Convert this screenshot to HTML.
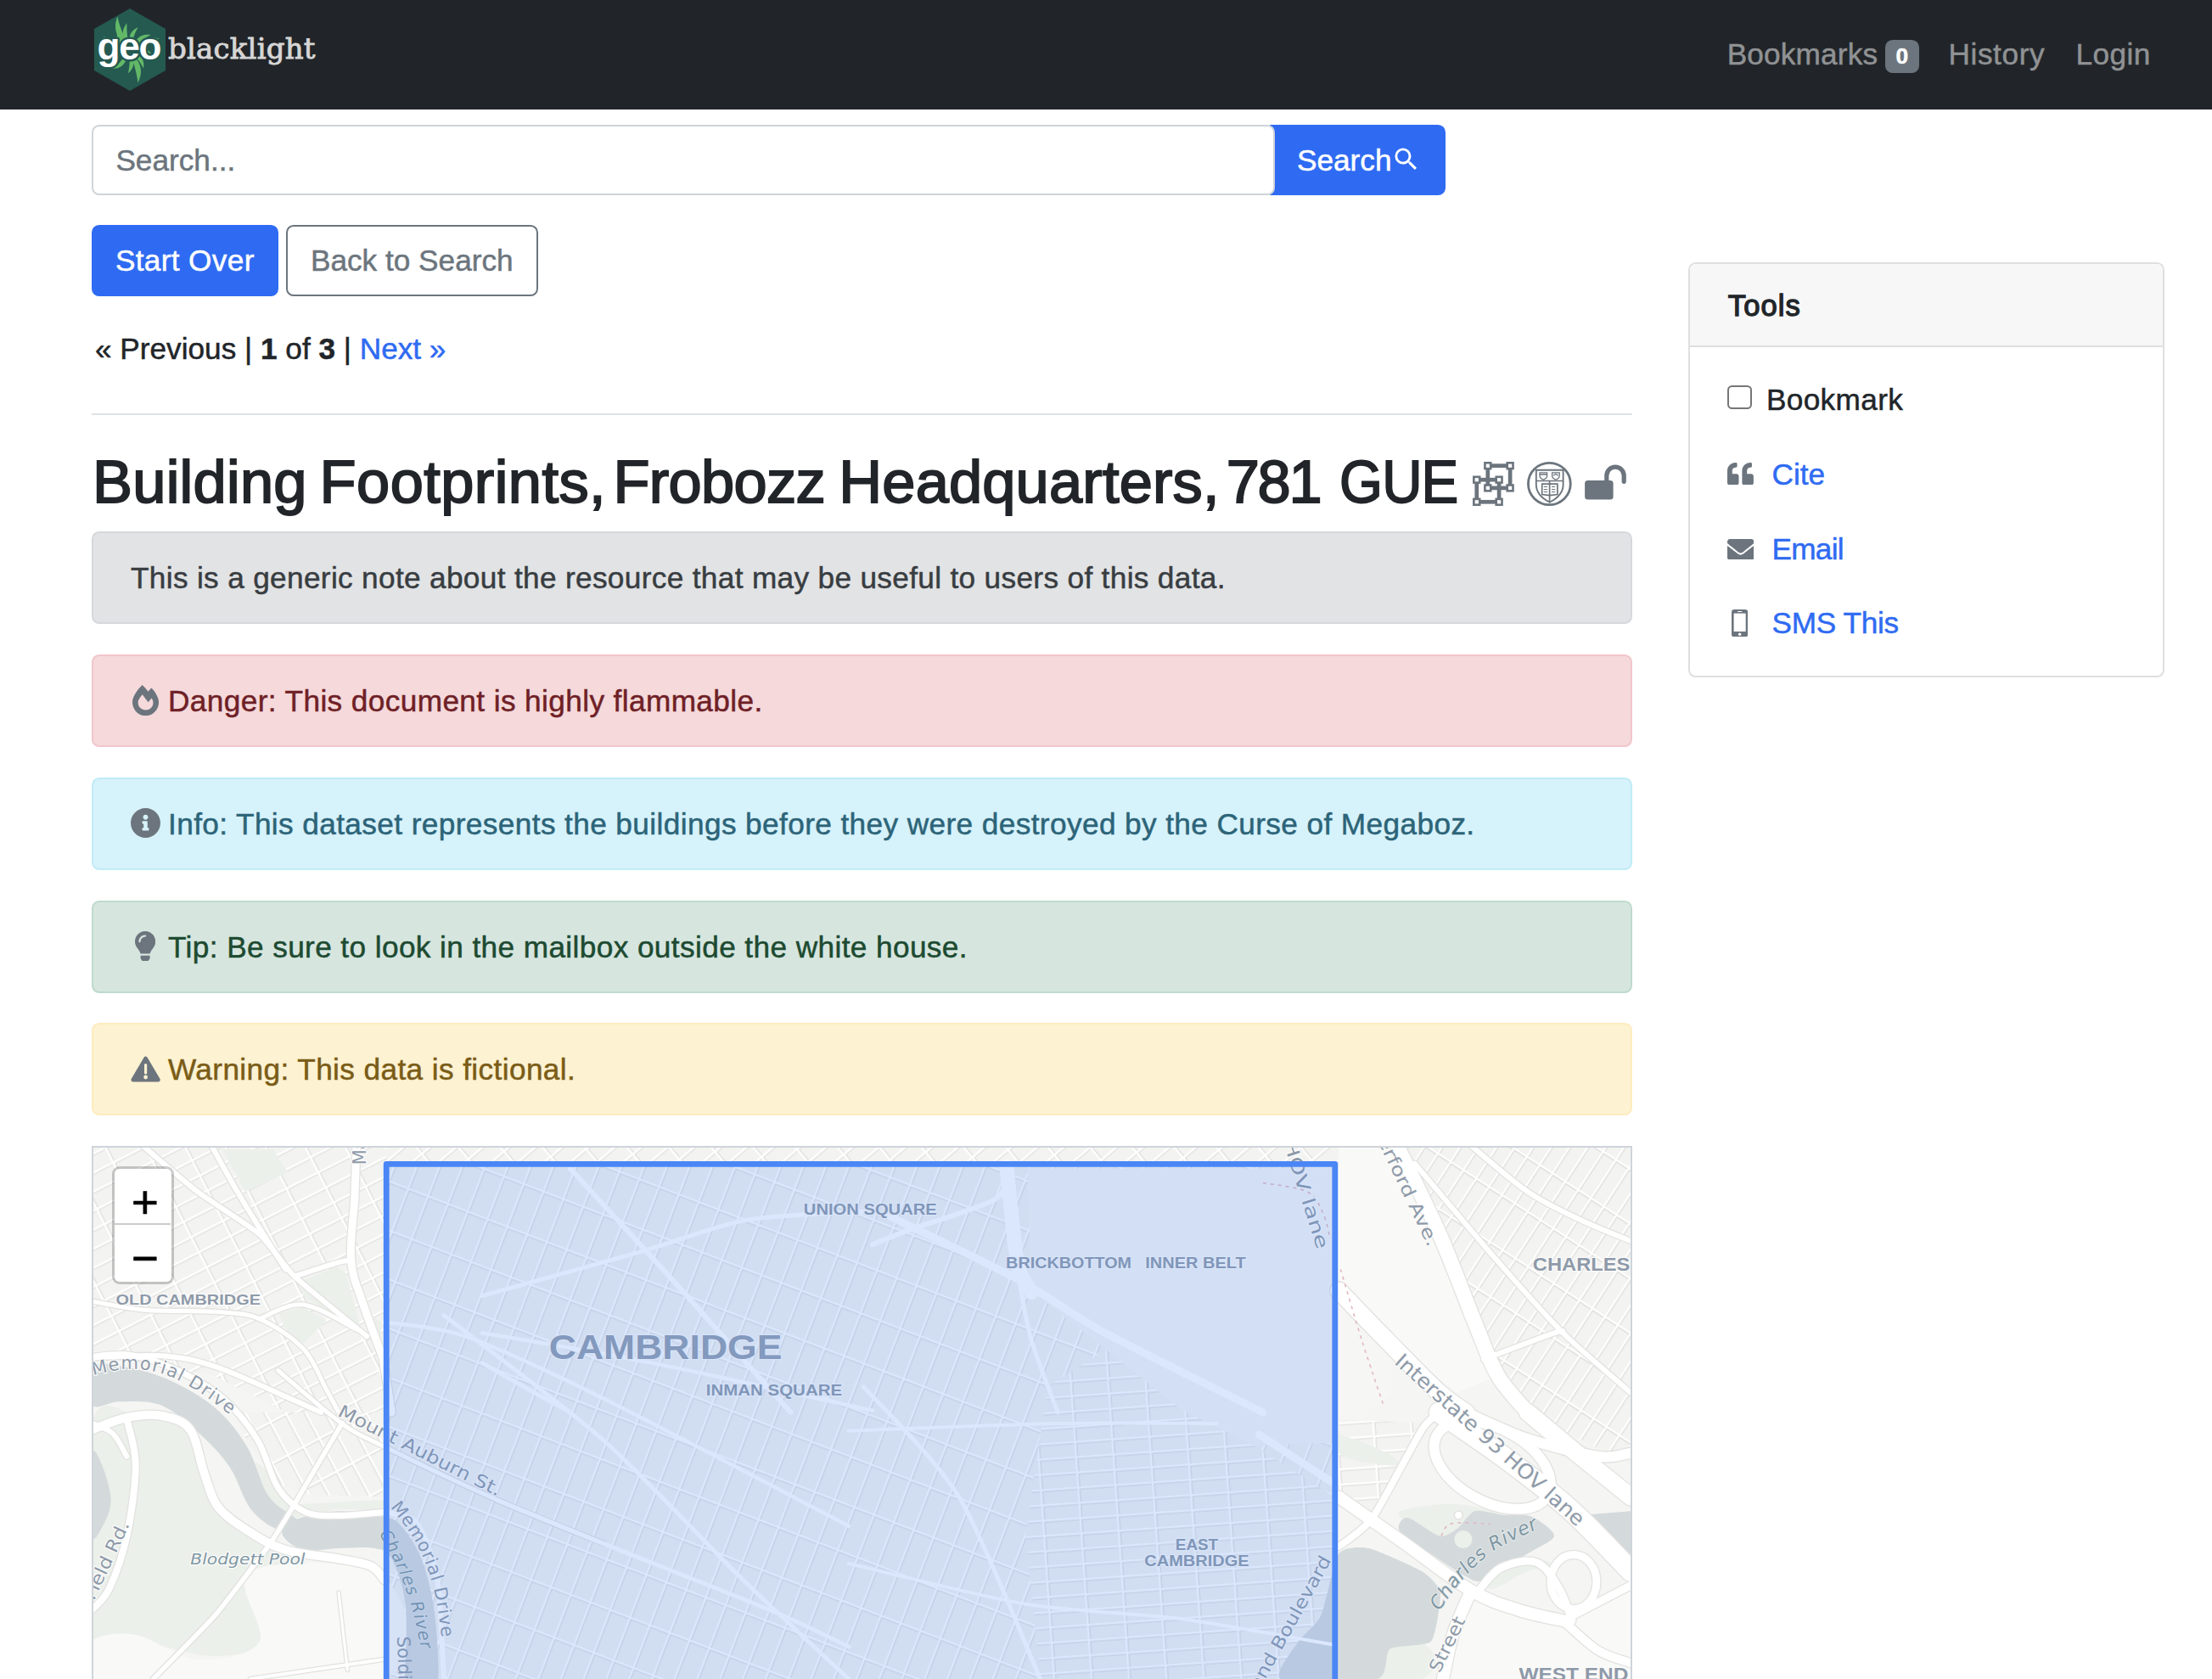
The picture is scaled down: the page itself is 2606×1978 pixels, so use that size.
<!DOCTYPE html>
<html lang="en">
<head>
<meta charset="utf-8">
<title>Building Footprints, Frobozz Headquarters, 781 GUE - GeoBlacklight</title>
<style>
*{box-sizing:border-box}
html,body{margin:0;padding:0}
body{width:2606px;height:1978px;overflow:hidden;background:#fff;color:#212529;
  font-family:"Liberation Sans",sans-serif;font-size:35.2px;line-height:1.5;position:relative;-webkit-text-stroke:.5px}
a{color:#2f6bf2;text-decoration:none}
/* ---------- top navbar ---------- */
#header-navbar{position:absolute;left:0;top:0;width:2606px;height:129px;background:#212529}
.navbar-brand{position:absolute;left:110px;top:10px;width:270px;height:100px;display:block}
.navbar-brand svg{position:absolute;left:0;top:0}
.topnav{position:absolute;left:0;top:0;margin:0;padding:0;list-style:none}
.topnav li{position:absolute;top:38px;white-space:nowrap;color:#909294;line-height:52.8px}
.topnav a{color:#909294}
.badge{position:absolute;left:0;top:9.1px;display:block;width:40px;height:39px;background:#6c757d;color:#fff;font-weight:700;font-size:26.4px;line-height:39px;
  border-radius:8.8px;text-align:center;letter-spacing:0}
/* ---------- search ---------- */
.search-q{position:absolute;left:108px;top:147px;width:1394px;height:83px;border:2.2px solid #ced4da;
  border-radius:8.8px;z-index:2;padding:0 26.4px;line-height:80.4px;color:#6c757d;background:#fff}
.search-btn{position:absolute;left:1496px;top:147px;width:207px;height:83px;background:#2f6bf2;color:#fff;
  border-radius:0 8.8px 8.8px 0;line-height:84.2px;padding-left:32px;white-space:nowrap}
.search-btn svg{position:absolute;left:143.2px;top:23.1px}
/* ---------- main ---------- */
.btn{position:absolute;top:265px;height:83.6px;line-height:80.6px;border-radius:8.8px;border:2.2px solid transparent;
  text-align:center;white-space:nowrap}
.btn-primary{left:108px;width:219.6px;letter-spacing:.35px;background:#2f6bf2;border-color:#2f6bf2;color:#fff}
.btn-outline{left:337px;width:296.6px;border-color:#6c757d;color:#6c757d;background:#fff}
.pagination-search-widgets{position:absolute;left:112px;top:384.8px;line-height:52.8px;white-space:nowrap}
hr.sep{position:absolute;left:108px;top:486.6px;width:1815px;height:0;border:0;border-top:2.2px solid #dee2e6;margin:0}
h1.title{position:absolute;left:107px;top:526px;margin:0;font-size:70.4px;line-height:84.5px;font-weight:400;white-space:nowrap;letter-spacing:-.85px;
  -webkit-text-stroke:1.9px #212529}
.alert{position:absolute;left:108px;width:1815px;height:109.2px;border:2.2px solid transparent;border-radius:8.8px;
  padding:1.1px 44px 0;line-height:104.8px;white-space:nowrap}
.alert svg{position:absolute}
.alert-secondary{top:626px;background:#e2e3e5;border-color:#d6d8db;color:#383d41}
.alert-danger{top:771.2px;background:#f5d9db;border-color:#f1c6cb;color:#6f1f26}
.alert-info{top:916px;background:#d6f2fb;border-color:#c1ebf7;color:#2c6478}
.alert-success{top:1060.6px;background:#d6e6df;border-color:#bfdacd;color:#1d4a31}
.alert-warning{top:1205.3px;background:#fdf2d2;border-color:#fdecbf;color:#7a5c17}
.alert{letter-spacing:.4px}
.alert-secondary{letter-spacing:.34px}
.alert .txt{margin-left:44px}
h1.title{width:1620px;height:84.5px}
h1.title span{position:absolute;top:0;display:block}
.title-icons svg{position:absolute}
/* ---------- sidebar ---------- */
.card{position:absolute;left:1988.6px;top:308.6px;width:561.4px;height:489px;border:2.2px solid #dfdfdf;border-radius:8.8px;background:#fff;overflow:hidden}
.card-header{height:98.4px;background:#f7f7f7;border-bottom:2.2px solid #dfdfdf;padding:0 45.2px}
.card-header h2{margin:0;font-size:34.6px;line-height:98px;font-weight:400;letter-spacing:1.1px;-webkit-text-stroke:1.3px #212529}
.tools{list-style:none;margin:0;padding:0;position:absolute;left:.9px;top:.9px;width:100%}
.tools li{position:absolute;left:0;width:100%;height:52.8px;white-space:nowrap;line-height:52.8px}
.tools li svg,.tools li a,.tools li label,.tools li .cb{position:absolute;top:0;display:block}
.tools .cb{width:28.7px;height:28.7px;border:2.4px solid #767676;border-radius:5.5px;background:#fff}
/* ---------- map ---------- */
#map{position:absolute;left:108px;top:1350px;width:1815px;height:640px;border:2.2px solid #ced4da;background:#f3f3f1;overflow:hidden}
#map svg#mapsvg{position:absolute;left:0;top:0;display:block}
.leaflet-control-zoom{position:absolute;left:22.3px;top:22.3px;width:73.2px;height:138.8px;border:3.6px solid rgba(0,0,0,.2);border-radius:9px;background:#fff;background-clip:padding-box;overflow:hidden}
.leaflet-control-zoom a{display:block;width:66px;height:66px;color:#000;text-align:center;background:#fff;font-size:54.5px;line-height:66px;-webkit-text-stroke:.7px #000;overflow:hidden}
.leaflet-control-zoom a.zin{border-bottom:2.2px solid #ccc}
.leaflet-control-zoom a span{display:block;position:relative;top:6.5px;left:2.5px}
</style>
</head>
<body>
<nav id="header-navbar">
  <a class="navbar-brand" href="#">
    <svg width="270" height="100" viewBox="0 0 270 100">
      <polygon points="43,0 85,24 85,73 43,97 1,73 1,24" fill="#255a51"/>
      <g transform="translate(42.8,49)" fill="#63b868"><path d="M-7.7 -8.5C-20.0 -20.0 -17.0 -33.3 -14.4 -39.5C-12.9 -31.9 -9.3 -21.8 -4.3 -10.7ZM-5.2 -10.2C-11.3 -19.8 -6.2 -28.3 -3.3 -31.8C-3.6 -26.6 -3.4 -19.4 -1.8 -11.4ZM-0.2 -11.5C-1.3 -20.8 6.1 -25.2 9.7 -26.8C7.6 -23.0 5.1 -17.6 3.4 -11.0ZM6.3 -9.6C11.3 -18.9 20.6 -18.5 24.8 -18.0C20.4 -15.8 14.6 -12.4 8.9 -7.3ZM8.9 -7.2C19.5 -16.9 30.4 -14.3 35.0 -13.4C28.7 -11.7 19.4 -10.1 10.2 -5.2ZM11.3 -2.0C19.0 -4.2 23.8 1.8 25.6 4.5C22.1 3.3 17.2 1.6 11.4 1.2ZM9.8 6.1C17.5 9.8 16.9 18.0 16.2 21.6C14.5 18.0 11.6 13.4 7.4 8.8ZM6.8 9.3C17.0 21.0 12.7 33.1 9.6 38.5C9.0 31.4 6.7 21.8 3.2 11.1ZM3.4 11.0C6.8 19.1 1.0 25.0 -1.9 27.3C-0.9 23.4 -0.0 17.9 -0.2 11.5ZM-4.1 10.7C-6.7 20.3 -15.6 21.8 -19.7 21.9C-16.1 19.1 -11.5 14.7 -7.2 8.9ZM-9.8 6.1C-16.1 11.0 -22.7 7.2 -25.4 5.4C-21.7 5.3 -16.6 5.0 -11.1 3.2ZM-11.4 -1.7C-24.3 -2.7 -29.0 -12.2 -30.9 -16.4C-26.1 -13.0 -19.3 -8.1 -10.5 -4.6ZM-9.6 -6.3C-15.8 -9.4 -15.1 -16.2 -14.8 -18.9C-13.2 -16.1 -11.4 -11.9 -7.8 -8.4Z"/><circle r="12.6" fill="#255a51"/></g>
      <text x="4.6" y="59.6" font-family="Liberation Sans, sans-serif" font-weight="700" font-size="44" fill="#fff" stroke="#255a51" stroke-width="5" paint-order="stroke" stroke-linejoin="round" letter-spacing="-1.2">geo</text>
      <text x="88" y="59" font-family="DejaVu Serif, serif" font-size="34" fill="#d6d6d6" stroke="#d6d6d6" stroke-width=".9" letter-spacing=".2">blacklight</text>
    </svg>
  </a>
  <ul class="topnav">
    <li style="left:2034.7px;letter-spacing:.18px"><a href="#">Bookmarks</a></li>
    <li style="left:2220.9px"><span class="badge">0</span></li>
    <li style="left:2295.5px;letter-spacing:.6px"><a href="#">History</a></li>
    <li style="left:2445.5px;letter-spacing:.4px"><a href="#">Login</a></li>
  </ul>
</nav>

<form class="search-query-form" role="search">
  <div class="search-q">Search...</div>
  <div class="search-btn">Search
    <svg width="35.2" height="35.2" viewBox="0 0 24 24"><path fill="#fff" d="M15.5 14h-.79l-.28-.27A6.471 6.471 0 0 0 16 9.5 6.5 6.5 0 1 0 9.5 16c1.61 0 3.09-.59 4.23-1.57l.27.28v.79l5 4.99L20.490 19l-4.990-5zm-6 0C7.010 14 5 11.990 5 9.500S7.010 5 9.500 5 14 7.010 14 9.500 11.990 14 9.500 14z"/></svg>
  </div>
</form>

<main id="main-container">
  <a class="btn btn-primary" href="#">Start Over</a>
  <a class="btn btn-outline" href="#">Back to Search</a>
  <div class="pagination-search-widgets">« Previous | <strong>1</strong> of <strong>3</strong> | <a href="#">Next »</a></div>
  <hr class="sep">
  <h1 class="title"><span style="left:2px;letter-spacing:.29px">Building</span> <span style="left:269.6px;letter-spacing:.45px">Footprints,</span> <span style="left:615.5px;letter-spacing:-.68px">Frobozz</span> <span style="left:881.3px;letter-spacing:.18px">Headquarters,</span> <span style="left:1337.8px;letter-spacing:-2.35px">781</span> <span style="left:1470.7px;letter-spacing:-.85px;transform:scaleX(.93);transform-origin:0 0">GUE</span></h1>

  <span class="title-icons">
    <svg style="left:1735px;top:544px" width="49" height="52" viewBox="0 0 49 52"><g fill="none" stroke="#6c757d" stroke-width="4.7"><rect x="17.8" y="4.65" width="26.3" height="26.25"/><rect x="4.75" y="21.2" width="26.35" height="26.1"/></g><g fill="#6c757d"><rect x="13.1" y="0" width="9.4" height="9.4"/><rect x="39.4" y="0" width="9.4" height="9.4"/><rect x="13.1" y="26.2" width="9.4" height="9.4"/><rect x="39.4" y="26.2" width="9.4" height="9.4"/><rect x="0" y="16.5" width="9.5" height="9.4"/><rect x="26.4" y="16.5" width="9.4" height="9.4"/><rect x="0" y="42.6" width="9.5" height="9.4"/><rect x="26.4" y="42.6" width="9.4" height="9.4"/></g><g fill="#fff"><rect x="15.7" y="2.6" width="4.2" height="4.2"/><rect x="42" y="2.6" width="4.2" height="4.2"/><rect x="15.7" y="28.8" width="4.2" height="4.2"/><rect x="42" y="28.8" width="4.2" height="4.2"/><rect x="2.65" y="19.1" width="4.2" height="4.2"/><rect x="29" y="19.1" width="4.2" height="4.2"/><rect x="2.65" y="45.2" width="4.2" height="4.2"/><rect x="29" y="45.2" width="4.2" height="4.2"/></g></svg>
    <svg style="left:1799px;top:544px" width="53" height="52" viewBox="0 0 53 52"><g fill="none" stroke="#6c757d"><ellipse cx="26.35" cy="26" rx="24.9" ry="24.6" stroke-width="2.8"/><path d="M10.8 9.800H42.600V27C42.600 38 34 44 26.700 47.700 19.400 44 10.800 38 10.800 27Z" stroke-width="1.900"/><path d="M10.800 22.500H42.600M26.600 22.500V47.700" stroke-width="1.700"/><path d="M15 12.800h8.600v4.300c0 2.200-2.400 3.300-4.300 4.100-1.900-.8-4.300-1.900-4.300-4.100zM15 15h8.600M29.600 12.800h8.600v4.300c0 2.200-2.400 3.300-4.300 4.100-1.900-.8-4.300-1.900-4.300-4.100zM31 16.300l2.900-1.800 2.900 1.800" stroke-width="1.300"/><path d="M17.7 26.2H35.9V38.6L26.6 39.6 17.7 38.6Z" stroke-width="1.7"/><path d="M19.800 29.500h4.300M19.800 32.500h4.300M19.800 35.500h4.300M29 29.500h4.300M29 32.500h4.300M29 35.500h4.300" stroke-width="1.200"/></g></svg>
    <svg style="left:1867px;top:547px" width="50" height="43" viewBox="0 0 50 43"><rect x=".1" y="19.100" width="33.500" height="22.300" rx="3.500" fill="#6c757d"/><path d="M25.800 20V13.400A10.200 10.200 0 0 1 46.200 13.400V20.300" fill="none" stroke="#6c757d" stroke-width="5.200" stroke-linecap="round"/></svg>
  </span>

  <div class="alert alert-secondary">This is a generic note about the resource that may be useful to users of this data.</div>
  <div class="alert alert-danger"><svg style="left:45.6px;top:33.5px" width="31.1" height="36.2" viewBox="0 0 448 512" preserveAspectRatio="none"><path fill="#6c757d" d="M323.560 51.200c-20.800 19.300-39.580 39.590-56.220 59.970C240.080 73.620 206.280 35.530 168 0 69.740 91.170 0 209.960 0 281.600 0 408.850 100.290 512 224 512s224-103.150 224-230.400c0-53.270-51.980-163.140-124.440-230.400zm-19.470 340.650C282.430 407.010 255.720 416 226.860 416 154.710 416 96 368.260 96 290.750c0-38.610 24.310-72.630 72.790-130.750 6.930 7.980 98.830 125.340 98.830 125.340l58.630-66.880c4.140 6.850 7.910 13.550 11.270 19.970 27.350 52.190 15.810 118.970-33.430 153.420z"/></svg><span class="txt">Danger: This document is highly flammable.</span></div>
  <div class="alert alert-info"><svg style="left:43.8px;top:33.7px" width="35" height="35" viewBox="8 8 496 496"><path fill="#6c757d" d="M256 8C119.043 8 8 119.083 8 256c0 136.997 111.043 248 248 248s248-111.003 248-248C504 119.083 392.957 8 256 8zm0 110c23.196 0 42 18.804 42 42s-18.804 42-42 42-42-18.804-42-42 18.804-42 42-42zm56 254c0 6.627-5.373 12-12 12h-88c-6.627 0-12-5.373-12-12v-24c0-6.627 5.373-12 12-12h12v-64h-12c-6.627 0-12-5.373-12-12v-24c0-6.627 5.373-12 12-12h64c6.627 0 12 5.373 12 12v100h12c6.627 0 12 5.373 12 12v24z"/></svg><span class="txt">Info: This dataset represents the buildings before they were destroyed by the Curse of Megaboz.</span></div>
  <div class="alert alert-success"><svg style="left:49.2px;top:34px" width="24.2" height="35.4" viewBox="0 0 352 512" preserveAspectRatio="none"><path fill="#6c757d" d="M96.060 454.350c.010 6.290 1.870 12.450 5.360 17.690l17.090 25.690a31.990 31.990 0 0 0 26.640 14.280h61.710a31.990 31.990 0 0 0 26.640-14.280l17.090-25.690a31.989 31.989 0 0 0 5.360-17.690l.040-38.350H96.010l.050 38.350zM0 176c0 44.370 16.450 84.850 43.560 115.780 16.520 18.850 42.360 58.230 52.210 91.450.040.260.070.520.110.780h160.240c.040-.260.070-.510.110-.780 9.850-33.220 35.690-72.600 52.210-91.450C335.550 260.850 352 220.370 352 176 352 78.610 272.910-.300 175.450 0 73.440.310 0 82.970 0 176zm176-80c-44.110 0-80 35.890-80 80 0 8.840-7.160 16-16 16s-16-7.160-16-16c0-61.760 50.240-112 112-112 8.840 0 16 7.160 16 16s-7.160 16-16 16z"/></svg><span class="txt">Tip: Be sure to look in the mailbox outside the white house.</span></div>
  <div class="alert alert-warning"><svg style="left:43.8px;top:36.8px" width="35.2" height="30.9" viewBox="0 0 35.2 30.9"><path d="M17.6 3.2 L32.2 28 H3 Z" fill="#6c757d" stroke="#6c757d" stroke-width="5" stroke-linejoin="round"/><path d="M17.6 10.5 V20" stroke="#fdf2d2" stroke-width="3.2" stroke-linecap="round" fill="none"/><circle cx="17.6" cy="25" r="2.4" fill="#fdf2d2"/></svg><span class="txt">Warning: This data is fictional.</span></div>

  <div id="map">
<svg id="mapsvg" width="1811" height="636" viewBox="110.2 1352.2 1811 636" font-family="DejaVu Sans, sans-serif">
<defs>
<pattern id="pA" width="42" height="20" patternUnits="userSpaceOnUse" patternTransform="translate(0 0) rotate(-27)"><rect width="42" height="20" fill="#f3f3f1"/><path d="M0 0H42M0 0V20" stroke="#d9d9d7" stroke-width="7.2"/><path d="M0 0H42M0 0V20" stroke="#ffffff" stroke-width="5"/></pattern>
<pattern id="pB" width="25" height="54" patternUnits="userSpaceOnUse" patternTransform="translate(0 0) rotate(21)"><rect width="25" height="54" fill="#f3f3f1"/><path d="M0 0H25M0 0V54" stroke="#d9d9d7" stroke-width="7.2"/><path d="M0 0H25M0 0V54" stroke="#ffffff" stroke-width="5"/></pattern>
<pattern id="pC" width="44" height="18" patternUnits="userSpaceOnUse" patternTransform="translate(0 0) rotate(-4)"><rect width="44" height="18" fill="#f3f3f1"/><path d="M0 0H44M0 0V18" stroke="#d9d9d7" stroke-width="7.2"/><path d="M0 0H44M0 0V18" stroke="#ffffff" stroke-width="5"/></pattern>
<pattern id="pD" width="18" height="54" patternUnits="userSpaceOnUse" patternTransform="translate(0 0) rotate(33)"><rect width="18" height="54" fill="#f3f3f1"/><path d="M0 0H18M0 0V54" stroke="#d9d9d7" stroke-width="6.8"/><path d="M0 0H18M0 0V54" stroke="#ffffff" stroke-width="4.6"/></pattern>
<pattern id="pE" width="44" height="21" patternUnits="userSpaceOnUse" patternTransform="translate(0 0) rotate(62)"><rect width="44" height="21" fill="#f3f3f1"/><path d="M0 0H44M0 0V21" stroke="#d9d9d7" stroke-width="7.2"/><path d="M0 0H44M0 0V21" stroke="#ffffff" stroke-width="5"/></pattern>
<pattern id="pF" width="38" height="20" patternUnits="userSpaceOnUse" patternTransform="translate(0 0) rotate(-40)"><rect width="38" height="20" fill="#f3f3f1"/><path d="M0 0H38M0 0V20" stroke="#d9d9d7" stroke-width="7.0"/><path d="M0 0H38M0 0V20" stroke="#ffffff" stroke-width="4.8"/></pattern>
<clipPath id="mc"><rect x="110.2" y="1352.2" width="1811" height="636"/></clipPath>
</defs>
<g clip-path="url(#mc)">
<rect x="110" y="1352" width="1812" height="637" fill="#f5f5f3"/>
<path d="M110 1352 L1922 1352 L1922 1372 L110 1372Z" fill="url(#pF)"/>
<path d="M110 1352 L455 1352 L455 1700 L400 1690 L330 1660 L250 1620 L110 1600Z" fill="url(#pA)"/>
<path d="M274.4 1664 L451.2 1664 L451.2 1763.8 L368 1761.8 L326.4 1747.2 L295.2 1705.6Z" fill="url(#pE)"/>
<rect x="455" y="1372" width="1118" height="620" fill="url(#pB)"/>
<path d="M455 1372 L1190 1372 L1230 1480 L1200 1560 L1120 1640 L1180 1988 L455 1988Z" fill="url(#pB)"/>
<path d="M1234.4 1633.8 L1303.8 1590.4 L1390.6 1659.8 L1477.4 1703.2 L1572.9 1764 L1572.9 1978 L1225.7 1978 L1208.3 1807.4Z" fill="url(#pC)"/>
<path d="M1211 1377 L1488.1 1377 L1640 1372 L1640 1640 L1573 1700 L1477.4 1703.2 L1390.6 1659.8 L1303.8 1590.4 L1215.2 1520.6Z" fill="#f6f6f4"/>
<path d="M1660.6 1350 L1921.7 1350 L1921.7 1664.1 L1921.7 1726.4 L1800 1664 L1764.6 1620.4 L1737.6 1558 L1696 1454Z" fill="url(#pD)"/>
<path d="M1577.4 1350 L1646.1 1350 L1696 1454 L1737.6 1558 L1764.6 1620.4 L1716.8 1641.2 L1633.6 1578.8 L1577.4 1520.6Z" fill="#f9f9f7"/>
<path d="M1733.4 1874.1 L1841.6 1909.4 L1921.7 1872 L1921.7 1978.1 L1700.2 1978.1Z" fill="#f9f9f7"/>
<path d="M1577.4 1672.3 L1675.2 1676.5 L1646.1 1732.6 L1617 1788.8 L1577.4 1761.8Z" fill="url(#pC)"/>
<path d="M353.4 1510.2 L397.1 1492.5 L407.5 1499.8 L425.2 1564.2 L417.9 1566.3 L357.6 1526.8Z M328.5 1547.6 L357.6 1540.3 L384.6 1555.9 L355.5 1585 L336.8 1566.3Z M261.9 1354.2 L322.2 1354.2 L338.9 1381.2 L289 1404.1Z M432.5 1547.6 L449.1 1558 L449.1 1583 L440.8 1580.9Z M108 1676.5 C118.4 1634.5 151 1670.2 170.4 1672.3 C189.8 1674.4 212 1675.8 224.5 1689 C237 1702.1 238.3 1734.7 245.3 1751.4 C252.2 1768 255 1777.7 266.1 1788.8 C277.2 1799.9 294.9 1808.9 311.8 1817.9 C328.8 1826.9 346.5 1837.3 368 1842.9 C389.5 1848.4 426.9 1846.3 440.8 1851.2 C454.7 1856.1 461.6 1866.8 451.2 1872 C440.8 1877.2 400.9 1878.9 378.4 1882.4 C355.9 1885.9 324.7 1884.1 316 1892.8 C307.3 1901.5 336.8 1924.7 326.4 1934.4 C316 1944.1 279.6 1951 253.6 1951 C227.6 1951 194.7 1938.9 170.4 1934.4 C146.1 1929.9 118.4 1967 108 1924 C97.6 1881 97.6 1718.4 108 1676.5Z M307.7 1726.4 C315.3 1731.6 334.4 1754.1 341 1761.8 C347.5 1769.4 329.2 1771.1 347.2 1772.2 C365.2 1773.2 432.1 1766.6 449.1 1768 C466.1 1769.4 457.4 1778.7 449.1 1780.5 C440.8 1782.2 417.2 1777 399.2 1778.4 C381.2 1779.8 352.7 1788.5 341 1788.8 C329.2 1789.1 336.1 1790.2 328.5 1780.5 C320.9 1770.8 298.7 1739.6 295.2 1730.6 C291.7 1721.5 300.1 1721.2 307.7 1726.4Z M1577.4 1691 C1586.8 1691 1622.2 1705.9 1633.6 1711.8 C1645 1717.7 1650.9 1724.7 1646.1 1726.4 C1641.2 1728.1 1615.9 1724.7 1604.5 1722.2 C1593 1719.8 1581.9 1717 1577.4 1711.8 C1572.9 1706.6 1568.1 1691 1577.4 1691Z M1650.2 1780.5 C1658.9 1776.3 1695.3 1770.8 1716.8 1772.2 C1738.3 1773.5 1774 1784.3 1779.2 1788.8 C1784.4 1793.3 1761.9 1795.7 1748 1799.2 C1734.1 1802.7 1709.9 1809.9 1696 1809.6 C1682.1 1809.3 1672.4 1802 1664.8 1797.1 C1657.2 1792.3 1641.6 1784.6 1650.2 1780.5Z M1623.2 1938.6 C1631.2 1931.3 1659.6 1931.6 1671 1934.4 C1682.5 1937.2 1691.1 1947.9 1691.8 1955.2 C1692.5 1962.5 1686.6 1974.3 1675.2 1978.1 C1663.8 1981.9 1631.9 1984.7 1623.2 1978.1 C1614.5 1971.5 1615.2 1945.8 1623.2 1938.6Z M1743.8 1857.4 C1750.8 1851.5 1785.4 1838.7 1800 1836.6 C1814.6 1834.6 1831.2 1842.5 1831.2 1845 C1831.2 1847.4 1812.1 1846.7 1800 1851.2 C1787.9 1855.7 1767.8 1871 1758.4 1872 C1749 1873 1736.9 1863.3 1743.8 1857.4Z M1820.8 1693.1 C1824.3 1690.7 1852 1697.3 1862.4 1701.4 C1872.8 1705.6 1886.7 1715.7 1883.2 1718.1 C1879.7 1720.5 1852 1720.2 1841.6 1716 C1831.2 1711.8 1817.3 1695.5 1820.8 1693.1Z" fill="#ebf0ea"/>
<path d="M295.2 1851.2 C319.5 1838.4 425.2 1836.3 451.2 1857.4 C477.2 1878.6 508.4 1958 451.2 1978.1 C394 1998.2 165.2 1985.4 108 1978.1 C50.8 1970.8 99.3 1943.1 108 1934.4 C116.7 1925.7 139.2 1922.6 160 1926.1 C180.8 1929.5 208.5 1953.8 232.8 1955.2 C257.1 1956.6 295.2 1951.7 305.6 1934.4 C316 1917.1 270.9 1864 295.2 1851.2Z" fill="#f9f9f7"/>
<path d="M109 1610.8 C115.6 1603.3 133.4 1608 148.8 1610.8 C164.3 1613.5 184.1 1618.9 201.7 1627 C219.4 1635.2 239.7 1646.7 254.6 1659.6 C269.5 1672.5 281.1 1687.4 291.2 1704.3 C301.4 1721.3 306.8 1747.8 315.7 1761.3 C324.5 1774.9 336.7 1779.6 344.1 1785.7 C351.6 1791.8 363.1 1795.2 360.4 1797.9 C357.7 1800.6 338.7 1805.4 327.9 1802 C317 1798.6 304.8 1789.8 295.3 1777.6 C285.8 1765.4 281.1 1743.7 270.9 1728.8 C260.7 1713.8 247.8 1700.3 234.3 1688.1 C220.7 1675.9 205.1 1661.6 189.5 1655.5 C173.9 1649.4 154.1 1651.5 140.7 1651.5 C127.3 1651.5 114.2 1662.3 109 1655.5 C103.7 1648.7 102.3 1618.2 109 1610.8Z M332.6 1807.5 C330.9 1801.6 336.1 1795.4 347.2 1790.9 C358.3 1786.4 381.9 1781.2 399.2 1780.5 C416.5 1779.8 438.7 1783.6 451.2 1786.7 C463.7 1789.8 466.1 1789.8 474.1 1799.2 C482.1 1808.6 492.5 1823.8 499 1842.9 C505.6 1861.9 511.2 1887.9 513.6 1913.6 C516 1939.3 519.1 1982.9 513.6 1996.8 C508.1 2010.7 486.2 2014.1 480.3 1996.8 C474.4 1979.5 481.4 1919.5 478.2 1892.8 C475.1 1866.1 467.8 1848.1 461.6 1836.6 C455.4 1825.2 451.2 1826.2 440.8 1824.2 C430.4 1822.1 413.1 1823.8 399.2 1824.2 C385.3 1824.5 368.7 1829 357.6 1826.2 C346.5 1823.5 334.4 1813.4 332.6 1807.5Z M108 1713.9 C110.1 1700.4 116.7 1717.4 120.5 1726.4 C124.3 1735.4 130.9 1755.9 130.9 1768 C130.9 1780.1 124.3 1792.6 120.5 1799.2 C116.7 1805.8 110.1 1821.7 108 1807.5 C105.9 1793.3 105.9 1727.4 108 1713.9Z M1508.8 1978.1 C1499.4 1973.7 1524.8 1941.9 1529.6 1934.4 C1534.4 1926.9 1551.9 1913.6 1556.6 1903.2 C1561.4 1892.8 1571.8 1838.3 1577.4 1830.4 C1583.1 1822.5 1603 1822.1 1612.8 1824.2 C1622.6 1826.2 1666.9 1846.4 1675.2 1851.2 C1683.5 1856 1693.9 1867.8 1696 1872 C1698.1 1876.2 1697 1886.6 1696 1892.8 C1695 1899 1691.4 1929.4 1685.6 1934.4 C1679.8 1939.4 1644 1938.4 1637.8 1942.7 C1631.5 1947.1 1636.1 1974.5 1623.2 1978.1 C1610.3 1981.6 1518.2 1982.4 1508.8 1978.1Z M1650.2 1793 C1651.6 1790.7 1654.5 1786.6 1660.6 1788.8 C1666.7 1791 1688.5 1807.9 1696 1809.6 C1703.5 1811.3 1711.3 1805.2 1716.8 1801.3 C1722.3 1797.4 1730.7 1782.7 1737.6 1780.5 C1744.5 1778.3 1759.9 1783.8 1768.8 1784.6 C1777.7 1785.5 1795.8 1783.4 1804.2 1786.7 C1812.5 1790 1831.8 1803.8 1831.2 1809.6 C1830.6 1815.4 1811.1 1823.5 1800 1830.4 C1788.9 1837.3 1757.7 1858 1748 1861.6 C1738.3 1865.2 1735.5 1861.6 1727.2 1857.4 C1718.9 1853.3 1695.9 1837.3 1685.6 1830.4 C1675.3 1823.5 1655 1810.4 1650.2 1805.4 C1645.5 1800.4 1648.9 1795.2 1650.2 1793Z M1868.6 1784.6 L1921.7 1780.5 L1921.7 1830.4 L1899.8 1830.4 L1883.2 1809.6Z" fill="#d4dadc"/>
<circle cx="1724.1" cy="1813.8" r="10.5" fill="#ebf0ea"/>
<circle cx="1718.5" cy="1785.1" r="5" fill="#ffffff" stroke="#e2e2e0" stroke-width="1.5"/>
<path d="M420 1350 C419.7 1360.4 419 1389.9 417.9 1412.4 C416.9 1434.9 412 1464.4 413.8 1485.2 C415.5 1506 422.1 1518.1 428.3 1537.2 C434.6 1556.3 447.4 1589.2 451.2 1599.6" fill="none" stroke="#e2e2e0" stroke-width="11.6" stroke-linecap="round" stroke-linejoin="round"/>
<path d="M451.2 1599.6 L461.6 1664.1" fill="none" stroke="#e2e2e0" stroke-width="11.6" stroke-linecap="round" stroke-linejoin="round"/>
<path d="M168.3 1350 C174.8 1355.4 219.1 1393.7 232.8 1404.1 C246.5 1414.5 294.2 1444 305.6 1454 C317 1464 334.5 1491.9 347.2 1503.9 C359.9 1516 424 1567.6 432.5 1574.6" fill="none" stroke="#e2e2e0" stroke-width="8.6" stroke-linecap="round" stroke-linejoin="round"/>
<path d="M249.4 1350 C252.4 1355.2 272.7 1392 278.6 1402 C284.4 1412 301.9 1440.5 307.7 1449.8 C313.5 1459.2 333.9 1491 336.8 1495.6" fill="none" stroke="#e2e2e0" stroke-width="8.6" stroke-linecap="round" stroke-linejoin="round"/>
<path d="M108 1533 C118.4 1534.8 146.1 1541.4 170.4 1543.4 C194.7 1545.5 231.1 1543.8 253.6 1545.5 C276.1 1547.3 288.3 1546.6 305.6 1553.8 C322.9 1561.1 344.4 1575.3 357.6 1589.2 C370.8 1603.1 377.7 1624.6 384.6 1637 C391.6 1649.5 396.8 1659.6 399.2 1664.1" fill="none" stroke="#e2e2e0" stroke-width="7.6" stroke-linecap="round" stroke-linejoin="round"/>
<path d="M108 1599.6 C121.9 1599.3 166.9 1595.8 191.2 1597.5 C215.5 1599.3 229.3 1602 253.6 1610 C277.9 1618 316 1636.3 336.8 1645.4 C357.6 1654.4 371.5 1661 378.4 1664.1" fill="none" stroke="#e2e2e0" stroke-width="8.6" stroke-linecap="round" stroke-linejoin="round"/>
<path d="M347.2 1503.9 C355.9 1501.1 387.8 1490.4 399.2 1487.3 C410.6 1484.2 413.1 1485.5 415.8 1485.2" fill="none" stroke="#e2e2e0" stroke-width="8.6" stroke-linecap="round" stroke-linejoin="round"/>
<path d="M305.6 1553.8 C314.3 1551.1 338.5 1535.1 357.6 1537.2 C376.7 1539.3 409.6 1561.5 420 1566.3" fill="none" stroke="#e2e2e0" stroke-width="7.6" stroke-linecap="round" stroke-linejoin="round"/>
<path d="M109 1598.6 C116.3 1598.2 136.1 1593.8 152.9 1596.5 C169.7 1599.2 191.6 1606.4 209.9 1614.8 C228.2 1623.3 247.2 1633.8 262.8 1647.4 C278.4 1660.9 292.6 1678.6 303.4 1696.2 C314.3 1713.8 318.4 1738.9 327.9 1753.2 C337.4 1767.4 348.2 1776.2 360.4 1781.7 C372.6 1787.1 385.8 1785.7 401.1 1785.7 C416.4 1785.7 443.8 1782.3 452.4 1781.7" fill="none" stroke="#e2e2e0" stroke-width="9.6" stroke-linecap="round" stroke-linejoin="round"/>
<path d="M108 1684.8 C114.9 1682.4 135.7 1673 149.6 1670.2 C163.5 1667.5 178.7 1665.7 191.2 1668.2 C203.7 1670.6 216.2 1673.4 224.5 1684.8 C232.8 1696.2 235.6 1721.5 241.1 1736.8 C246.7 1752.1 248.7 1764.9 257.8 1776.3 C266.8 1787.8 282 1797.1 295.2 1805.4 C308.4 1813.8 319.5 1821 336.8 1826.2 C354.1 1831.4 382.6 1833.5 399.2 1836.6 C415.8 1839.8 427.6 1840.8 436.6 1845 C445.7 1849.1 450.5 1858.8 453.3 1861.6" fill="none" stroke="#e2e2e0" stroke-width="12.6" stroke-linecap="round" stroke-linejoin="round"/>
<path d="M149.6 1672.3 C151.3 1681.3 160 1703.5 160 1726.4 C160 1749.3 154.8 1785.3 149.6 1809.6 C144.4 1833.9 135.7 1857.4 128.8 1872 C121.9 1886.6 111.5 1892.8 108 1897" fill="none" stroke="#e2e2e0" stroke-width="10.6" stroke-linecap="round" stroke-linejoin="round"/>
<path d="M108 1676.5 C112.2 1678.6 126 1682.4 133 1689 C139.9 1695.5 146.8 1711.5 149.6 1716" fill="none" stroke="#e2e2e0" stroke-width="8.6" stroke-linecap="round" stroke-linejoin="round"/>
<path d="M403.4 1676.5 C399.6 1682.9 353 1762.5 347.2 1772.2 C341.4 1781.9 322.2 1813.3 316 1822.1 C309.8 1830.8 262.6 1892.8 253.6 1903.2 C244.6 1913.6 185.7 1973.1 180.8 1978.1" fill="none" stroke="#e2e2e0" stroke-width="8.1" stroke-linecap="round" stroke-linejoin="round"/>
<path d="M451.2 1955.2 L295.2 1978.1" fill="none" stroke="#e2e2e0" stroke-width="6.6" stroke-linecap="round" stroke-linejoin="round"/>
<path d="M399.2 1876.2 L409.6 1967.7" fill="none" stroke="#e2e2e0" stroke-width="5.6" stroke-linecap="round" stroke-linejoin="round"/>
<path d="M327.9 1614.8 C340.1 1625 380.4 1660.9 401.1 1675.9 C421.9 1690.8 421.5 1689.1 452.4 1704.3 C483.2 1719.6 543.2 1748.4 586.2 1767.4 C629.2 1786.4 689.7 1809.8 710.4 1818.3" fill="none" stroke="#e2e2e0" stroke-width="7.6" stroke-linecap="round" stroke-linejoin="round"/>
<path d="M1646.1 1350 C1654.4 1367.3 1680.7 1419.3 1696 1454 C1711.3 1488.7 1726.2 1530.3 1737.6 1558 C1749 1585.7 1754.2 1602.7 1764.6 1620.4 C1775 1638.1 1794.1 1656.8 1800 1664.1" fill="none" stroke="#e2e2e0" stroke-width="19.6" stroke-linecap="round" stroke-linejoin="round"/>
<path d="M1800 1664 C1810.4 1672.7 1842.1 1699.4 1862.4 1716 C1882.7 1732.6 1911.8 1755.9 1921.7 1763.8" fill="none" stroke="#e2e2e0" stroke-width="22.6" stroke-linecap="round" stroke-linejoin="round"/>
<path d="M1577.4 1520.6 C1586.8 1530.3 1613.8 1558.7 1633.6 1578.8 C1653.4 1598.9 1680.4 1627 1696 1641.2 C1711.6 1655.4 1722 1660.3 1727.2 1664.1" fill="none" stroke="#e2e2e0" stroke-width="22.6" stroke-linecap="round" stroke-linejoin="round"/>
<path d="M1696 1664 C1709.9 1673.7 1753.2 1702.8 1779.2 1722.2 C1805.2 1741.7 1828.3 1759 1852 1780.5 C1875.7 1802 1910.1 1839.4 1921.7 1851.2" fill="none" stroke="#e2e2e0" stroke-width="26.6" stroke-linecap="round" stroke-linejoin="round"/>
<path d="M1727.2 1664 C1739.3 1669.2 1774 1686.5 1800 1695.2 C1826 1703.9 1862.9 1713.2 1883.2 1716 C1903.5 1718.8 1915.3 1712.5 1921.7 1711.8" fill="none" stroke="#e2e2e0" stroke-width="14.6" stroke-linecap="round" stroke-linejoin="round"/>
<path d="M1577.4 1763.8 C1590.3 1772.9 1628.4 1799.5 1654.4 1817.9 C1680.4 1836.3 1710.9 1860.9 1733.4 1874.1 C1756 1887.3 1771.6 1891.1 1789.6 1897 C1807.6 1902.9 1832.9 1907.4 1841.6 1909.4" fill="none" stroke="#e2e2e0" stroke-width="16.6" stroke-linecap="round" stroke-linejoin="round"/>
<path d="M1733.4 1874.1 C1730 1882.4 1718.2 1906.7 1712.6 1924 C1707.1 1941.3 1702.2 1969.1 1700.2 1978.1" fill="none" stroke="#e2e2e0" stroke-width="16.6" stroke-linecap="round" stroke-linejoin="round"/>
<path d="M1577.4 1822.1 C1581.4 1818.8 1607.2 1802.5 1617 1788.8 C1626.7 1775.1 1667.3 1697.3 1675.2 1684.8 C1683.1 1672.3 1693.9 1666.1 1696 1664" fill="none" stroke="#e2e2e0" stroke-width="10.6" stroke-linecap="round" stroke-linejoin="round"/>
<path d="M1841.6 1909.4 C1848.5 1915.3 1869.9 1936.5 1883.2 1944.8 C1896.5 1953.1 1915.3 1956.9 1921.7 1959.4" fill="none" stroke="#e2e2e0" stroke-width="12.6" stroke-linecap="round" stroke-linejoin="round"/>
<path d="M1841.6 1909.4 L1921.7 1867.8" fill="none" stroke="#e2e2e0" stroke-width="11.6" stroke-linecap="round" stroke-linejoin="round"/>
<path d="M1758.4 1726.4m-62 0a62 36 28 1 0 124 0a62 36 28 1 0 -124 0" fill="none" stroke="#e2e2e0" stroke-width="14.6" stroke-linecap="round" stroke-linejoin="round"/>
<path d="M1854.1 1863.7m-27 0a27 32 0 1 0 54 0a27 32 0 1 0 -54 0" fill="none" stroke="#e2e2e0" stroke-width="11.6" stroke-linecap="round" stroke-linejoin="round"/>
<path d="M1743.8 1872 C1748 1867.8 1757.7 1852.2 1768.8 1847 C1779.9 1841.8 1799 1836.6 1810.4 1840.8 C1821.8 1845 1830.5 1860.6 1837.4 1872 C1844.4 1883.4 1849.6 1903.2 1852 1909.4" fill="none" stroke="#e2e2e0" stroke-width="11.6" stroke-linecap="round" stroke-linejoin="round"/>
<path d="M1733.4 1350 C1744.5 1359 1778.5 1389.5 1800 1404.1 C1821.5 1418.6 1842.1 1427.7 1862.4 1437.4 C1882.7 1447.1 1911.8 1458.2 1921.7 1462.3" fill="none" stroke="#e2e2e0" stroke-width="8.6" stroke-linecap="round" stroke-linejoin="round"/>
<path d="M1666.9 1370.8 C1676 1381.6 1740.9 1459 1758.4 1479 C1775.9 1498.9 1825.3 1554.3 1841.6 1570.5 C1857.9 1586.7 1913.7 1634.1 1921.7 1641.2" fill="none" stroke="#e2e2e0" stroke-width="8.6" stroke-linecap="round" stroke-linejoin="round"/>
<path d="M1748 1601.7 C1761.9 1596.5 1815.6 1575.7 1831.2 1570.5 C1846.8 1565.3 1839.9 1570.5 1841.6 1570.5" fill="none" stroke="#e2e2e0" stroke-width="8.6" stroke-linecap="round" stroke-linejoin="round"/>
<g fill="none" stroke="#fff" stroke-linecap="round" stroke-linejoin="round">
<path d="M420 1350 C419.7 1360.4 419 1389.9 417.9 1412.4 C416.9 1434.9 412 1464.4 413.8 1485.2 C415.5 1506 422.1 1518.1 428.3 1537.2 C434.6 1556.3 447.4 1589.2 451.2 1599.6" stroke-width="9"/>
<path d="M451.2 1599.6 L461.6 1664.1" stroke-width="9"/>
<path d="M168.3 1350 C174.8 1355.4 219.1 1393.7 232.8 1404.1 C246.5 1414.5 294.2 1444 305.6 1454 C317 1464 334.5 1491.9 347.2 1503.9 C359.9 1516 424 1567.6 432.5 1574.6" stroke-width="6"/>
<path d="M249.4 1350 C252.4 1355.2 272.7 1392 278.6 1402 C284.4 1412 301.9 1440.5 307.7 1449.8 C313.5 1459.2 333.9 1491 336.8 1495.6" stroke-width="6"/>
<path d="M108 1533 C118.4 1534.8 146.1 1541.4 170.4 1543.4 C194.7 1545.5 231.1 1543.8 253.6 1545.5 C276.1 1547.3 288.3 1546.6 305.6 1553.8 C322.9 1561.1 344.4 1575.3 357.6 1589.2 C370.8 1603.1 377.7 1624.6 384.6 1637 C391.6 1649.5 396.8 1659.6 399.2 1664.1" stroke-width="5"/>
<path d="M108 1599.6 C121.9 1599.3 166.9 1595.8 191.2 1597.5 C215.5 1599.3 229.3 1602 253.6 1610 C277.9 1618 316 1636.3 336.8 1645.4 C357.6 1654.4 371.5 1661 378.4 1664.1" stroke-width="6"/>
<path d="M347.2 1503.9 C355.9 1501.1 387.8 1490.4 399.2 1487.3 C410.6 1484.2 413.1 1485.5 415.8 1485.2" stroke-width="6"/>
<path d="M305.6 1553.8 C314.3 1551.1 338.5 1535.1 357.6 1537.2 C376.7 1539.3 409.6 1561.5 420 1566.3" stroke-width="5"/>
<path d="M109 1598.6 C116.3 1598.2 136.1 1593.8 152.9 1596.5 C169.7 1599.2 191.6 1606.4 209.9 1614.8 C228.2 1623.3 247.2 1633.8 262.8 1647.4 C278.4 1660.9 292.6 1678.6 303.4 1696.2 C314.3 1713.8 318.4 1738.9 327.9 1753.2 C337.4 1767.4 348.2 1776.2 360.4 1781.7 C372.6 1787.1 385.8 1785.7 401.1 1785.7 C416.4 1785.7 443.8 1782.3 452.4 1781.7" stroke-width="7"/>
<path d="M108 1684.8 C114.9 1682.4 135.7 1673 149.6 1670.2 C163.5 1667.5 178.7 1665.7 191.2 1668.2 C203.7 1670.6 216.2 1673.4 224.5 1684.8 C232.8 1696.2 235.6 1721.5 241.1 1736.8 C246.7 1752.1 248.7 1764.9 257.8 1776.3 C266.8 1787.8 282 1797.1 295.2 1805.4 C308.4 1813.8 319.5 1821 336.8 1826.2 C354.1 1831.4 382.6 1833.5 399.2 1836.6 C415.8 1839.8 427.6 1840.8 436.6 1845 C445.7 1849.1 450.5 1858.8 453.3 1861.6" stroke-width="10"/>
<path d="M149.6 1672.3 C151.3 1681.3 160 1703.5 160 1726.4 C160 1749.3 154.8 1785.3 149.6 1809.6 C144.4 1833.9 135.7 1857.4 128.8 1872 C121.9 1886.6 111.5 1892.8 108 1897" stroke-width="8"/>
<path d="M108 1676.5 C112.2 1678.6 126 1682.4 133 1689 C139.9 1695.5 146.8 1711.5 149.6 1716" stroke-width="6"/>
<path d="M403.4 1676.5 C399.6 1682.9 353 1762.5 347.2 1772.2 C341.4 1781.9 322.2 1813.3 316 1822.1 C309.8 1830.8 262.6 1892.8 253.6 1903.2 C244.6 1913.6 185.7 1973.1 180.8 1978.1" stroke-width="5.5"/>
<path d="M451.2 1955.2 L295.2 1978.1" stroke-width="4"/>
<path d="M399.2 1876.2 L409.6 1967.7" stroke-width="3"/>
<path d="M327.9 1614.8 C340.1 1625 380.4 1660.9 401.1 1675.9 C421.9 1690.8 421.5 1689.1 452.4 1704.3 C483.2 1719.6 543.2 1748.4 586.2 1767.4 C629.2 1786.4 689.7 1809.8 710.4 1818.3" stroke-width="5"/>
<path d="M1646.1 1350 C1654.4 1367.3 1680.7 1419.3 1696 1454 C1711.3 1488.7 1726.2 1530.3 1737.6 1558 C1749 1585.7 1754.2 1602.7 1764.6 1620.4 C1775 1638.1 1794.1 1656.8 1800 1664.1" stroke-width="17"/>
<path d="M1800 1664 C1810.4 1672.7 1842.1 1699.4 1862.4 1716 C1882.7 1732.6 1911.8 1755.9 1921.7 1763.8" stroke-width="20"/>
<path d="M1577.4 1520.6 C1586.8 1530.3 1613.8 1558.7 1633.6 1578.8 C1653.4 1598.9 1680.4 1627 1696 1641.2 C1711.6 1655.4 1722 1660.3 1727.2 1664.1" stroke-width="20"/>
<path d="M1696 1664 C1709.9 1673.7 1753.2 1702.8 1779.2 1722.2 C1805.2 1741.7 1828.3 1759 1852 1780.5 C1875.7 1802 1910.1 1839.4 1921.7 1851.2" stroke-width="24"/>
<path d="M1727.2 1664 C1739.3 1669.2 1774 1686.5 1800 1695.2 C1826 1703.9 1862.9 1713.2 1883.2 1716 C1903.5 1718.8 1915.3 1712.5 1921.7 1711.8" stroke-width="12"/>
<path d="M1577.4 1763.8 C1590.3 1772.9 1628.4 1799.5 1654.4 1817.9 C1680.4 1836.3 1710.9 1860.9 1733.4 1874.1 C1756 1887.3 1771.6 1891.1 1789.6 1897 C1807.6 1902.9 1832.9 1907.4 1841.6 1909.4" stroke-width="14"/>
<path d="M1733.4 1874.1 C1730 1882.4 1718.2 1906.7 1712.6 1924 C1707.1 1941.3 1702.2 1969.1 1700.2 1978.1" stroke-width="14"/>
<path d="M1577.4 1822.1 C1581.4 1818.8 1607.2 1802.5 1617 1788.8 C1626.7 1775.1 1667.3 1697.3 1675.2 1684.8 C1683.1 1672.3 1693.9 1666.1 1696 1664" stroke-width="8"/>
<path d="M1841.6 1909.4 C1848.5 1915.3 1869.9 1936.5 1883.2 1944.8 C1896.5 1953.1 1915.3 1956.9 1921.7 1959.4" stroke-width="10"/>
<path d="M1841.6 1909.4 L1921.7 1867.8" stroke-width="9"/>
<path d="M1758.4 1726.4m-62 0a62 36 28 1 0 124 0a62 36 28 1 0 -124 0" stroke-width="12"/>
<path d="M1854.1 1863.7m-27 0a27 32 0 1 0 54 0a27 32 0 1 0 -54 0" stroke-width="9"/>
<path d="M1743.8 1872 C1748 1867.8 1757.7 1852.2 1768.8 1847 C1779.9 1841.8 1799 1836.6 1810.4 1840.8 C1821.8 1845 1830.5 1860.6 1837.4 1872 C1844.4 1883.4 1849.6 1903.2 1852 1909.4" stroke-width="9"/>
<path d="M1733.4 1350 C1744.5 1359 1778.5 1389.5 1800 1404.1 C1821.5 1418.6 1842.1 1427.7 1862.4 1437.4 C1882.7 1447.1 1911.8 1458.2 1921.7 1462.3" stroke-width="6"/>
<path d="M1666.9 1370.8 C1676 1381.6 1740.9 1459 1758.4 1479 C1775.9 1498.9 1825.3 1554.3 1841.6 1570.5 C1857.9 1586.7 1913.7 1634.1 1921.7 1641.2" stroke-width="6"/>
<path d="M1748 1601.7 C1761.9 1596.5 1815.6 1575.7 1831.2 1570.5 C1846.8 1565.3 1839.9 1570.5 1841.6 1570.5" stroke-width="6"/>
</g>
<g fill="none" stroke="#fff" stroke-linecap="round" stroke-linejoin="round">
<path d="M568 1526.8 C593 1519.9 713.6 1486.7 755.2 1474.8 C796.8 1462.9 843.6 1443.7 880 1437.4 C916.4 1431 1008.3 1428.3 1028.1 1427" stroke-width="5"/>
<path d="M672 1377 C688.1 1394.5 763.2 1475.6 792.6 1508.1 C822 1540.5 873.9 1599.6 892.5 1620.4 C911.1 1641.2 926.7 1658.3 932 1664.1" stroke-width="6"/>
<path d="M568 1570.5 C587.4 1573.8 677.5 1588.8 713.6 1595.4 C749.7 1602.1 796.5 1611.5 838.4 1620.4 C880.3 1629.3 1002.8 1656.5 1028.1 1662" stroke-width="4.5"/>
<path d="M568 1605.8 C576.3 1610.6 616.5 1633.4 630.4 1641.2 C644.3 1649 666.5 1661 672 1664.1" stroke-width="5"/>
<path d="M1186.1 1375 C1187.2 1385.5 1192.5 1437.9 1194.4 1454 C1196.3 1470.1 1197.9 1486.4 1200.6 1495.6 C1203.4 1504.8 1213.3 1519 1215.2 1522.6" stroke-width="17"/>
<path d="M1048.8 1433.2 C1069 1443.2 1167.4 1490.1 1200.6 1508.1 C1233.9 1526.1 1260.1 1547.6 1298.4 1568.4 C1336.7 1589.2 1462.8 1651.3 1488.1 1664.1" stroke-width="9"/>
<path d="M1483.5 1690.2 L1569.8 1746.6" stroke-width="9"/>
<path d="M1028 1466.5 C1033.5 1464.3 1050.2 1457.1 1069.6 1449.8 C1089 1442.6 1158.1 1422.4 1173.6 1412.4 C1189.1 1402.4 1184.4 1380 1186.1 1375" stroke-width="6"/>
<path d="M1200.6 1508.1 C1202.6 1517.5 1209.1 1558 1215.2 1578.8 C1221.3 1599.6 1242.2 1652.7 1246.4 1664.1" stroke-width="5"/>
<path d="M1017.4 1633.8 C1032.4 1651.2 1102.4 1718.1 1130.2 1764 C1158 1809.9 1212.9 1949.4 1225.7 1978" stroke-width="5"/>
<path d="M1000 1685.9 C1032.4 1684.7 1185.2 1678.4 1243 1677.2 C1300.9 1676 1408.5 1677.2 1434 1677.2" stroke-width="4"/>
<path d="M1000 1842.1 C1027.8 1848.5 1156.2 1881.2 1208.3 1889.9 C1260.4 1898.5 1342.4 1900.9 1390.6 1907.2 C1438.8 1913.6 1545.9 1933.5 1569.8 1937.6" stroke-width="4"/>
<path d="M586.2 1767.4 C602.8 1774.2 666.7 1800.6 710.4 1818.3 C754 1835.9 875.2 1883.4 913.8 1899.7 C952.4 1915.9 988.6 1934.9 1000.1 1940.3" stroke-width="5"/>
<path d="M523.2 1549.7 C548.1 1569.3 663.7 1655 710.4 1696.2 C757 1737.4 834.5 1821.4 873.1 1859 C911.7 1896.6 983.1 1962.3 1000.1 1978.2" stroke-width="5"/>
<path d="M452.4 1557.9 C465.1 1560 513.2 1562.2 547.6 1574.1 C582 1586.1 650 1617.5 710.4 1647.4 C770.7 1677.2 961.4 1777.9 1000.1 1797.9" stroke-width="4.5"/>
<path d="M452.4 1781.7 C457.5 1783.3 482.3 1783.6 490.6 1793.9 C499 1804.2 510.7 1834.4 515 1859 C519.4 1883.5 522.1 1962.3 523.2 1978.2" stroke-width="6"/>
</g>
<path d="M1488 1393.7 C1496.7 1395.4 1528.2 1398.2 1540 1404.1 C1551.8 1410 1554.2 1420 1558.7 1429 C1563.2 1438.1 1565.7 1453.3 1567 1458.2" fill="none" stroke="#e2b8bf" stroke-width="1.6" stroke-dasharray="4 5"/>
<path d="M1579.5 1495.6 C1583.7 1509.5 1596.2 1552.5 1604.5 1578.8 C1612.8 1605.1 1625.3 1641.2 1629.4 1653.7" fill="none" stroke="#e2b8bf" stroke-width="1.6" stroke-dasharray="4 5"/>
<path d="M1698.1 1809.6 C1700.2 1807.2 1700.9 1797.4 1710.6 1795 C1720.3 1792.7 1748.7 1795.4 1756.3 1795.5" fill="none" stroke="#e2b8bf" stroke-width="1.6" stroke-dasharray="4 5"/>
<g>
<text x="136.7" y="1537.2" font-size="17.3" font-weight="600" fill="#8e9aa9" font-family="Liberation Sans, sans-serif" textLength="170.5" lengthAdjust="spacingAndGlyphs" stroke="#fbfbfa" stroke-width="2.5" paint-order="stroke" stroke-linejoin="round">OLD CAMBRIDGE</text>
<text x="647" y="1601.7" font-size="41" font-weight="700" fill="#929eaf" font-family="Liberation Sans, sans-serif" textLength="274.6" lengthAdjust="spacingAndGlyphs" stroke="#fbfbfa" stroke-width="2.5" paint-order="stroke" stroke-linejoin="round">CAMBRIDGE</text>
<text x="832" y="1644.3" font-size="18.6" font-weight="600" fill="#8e9aa9" font-family="Liberation Sans, sans-serif" textLength="160.3" lengthAdjust="spacingAndGlyphs" stroke="#fbfbfa" stroke-width="2.5" paint-order="stroke" stroke-linejoin="round">INMAN SQUARE</text>
<text x="947" y="1431.5" font-size="18.6" font-weight="600" fill="#8e9aa9" font-family="Liberation Sans, sans-serif" textLength="157" lengthAdjust="spacingAndGlyphs" stroke="#fbfbfa" stroke-width="2.5" paint-order="stroke" stroke-linejoin="round">UNION SQUARE</text>
<text x="1185.3" y="1494" font-size="18.6" font-weight="600" fill="#8e9aa9" font-family="Liberation Sans, sans-serif" textLength="148" lengthAdjust="spacingAndGlyphs" stroke="#fbfbfa" stroke-width="2.5" paint-order="stroke" stroke-linejoin="round">BRICKBOTTOM</text>
<text x="1349.4" y="1494" font-size="18.6" font-weight="600" fill="#8e9aa9" font-family="Liberation Sans, sans-serif" textLength="118.5" lengthAdjust="spacingAndGlyphs" stroke="#fbfbfa" stroke-width="2.5" paint-order="stroke" stroke-linejoin="round">INNER BELT</text>
<text x="1385" y="1826" font-size="18.6" font-weight="600" fill="#8e9aa9" font-family="Liberation Sans, sans-serif" textLength="50.3" lengthAdjust="spacingAndGlyphs" stroke="#fbfbfa" stroke-width="2.5" paint-order="stroke" stroke-linejoin="round">EAST</text>
<text x="1348.5" y="1845.6" font-size="18.6" font-weight="600" fill="#8e9aa9" font-family="Liberation Sans, sans-serif" textLength="123.3" lengthAdjust="spacingAndGlyphs" stroke="#fbfbfa" stroke-width="2.5" paint-order="stroke" stroke-linejoin="round">CAMBRIDGE</text>
<text x="1806" y="1497.3" font-size="21.5" font-weight="600" fill="#8e9aa9" font-family="Liberation Sans, sans-serif" textLength="114.6" lengthAdjust="spacingAndGlyphs" stroke="#fbfbfa" stroke-width="2.5" paint-order="stroke" stroke-linejoin="round">CHARLES</text>
<text x="1923" y="1497.3" font-size="21.5" font-weight="600" fill="#8e9aa9" font-family="Liberation Sans, sans-serif" textLength="80" lengthAdjust="spacingAndGlyphs" stroke="#fbfbfa" stroke-width="2.5" paint-order="stroke" stroke-linejoin="round">TOWN</text>
<text x="1789.6" y="1980" font-size="21.5" font-weight="600" fill="#8e9aa9" font-family="Liberation Sans, sans-serif" textLength="129" lengthAdjust="spacingAndGlyphs" stroke="#fbfbfa" stroke-width="2.5" paint-order="stroke" stroke-linejoin="round">WEST END</text>
<text x="224.5" y="1842.9" font-size="18.5" font-weight="400" fill="#7f97a3" textLength="135.2" lengthAdjust="spacingAndGlyphs" font-style="italic" stroke="#fbfbfa" stroke-width="2.5" paint-order="stroke" stroke-linejoin="round">Blodgett Pool</text>
<text x="397" y="1667.7" font-size="21" font-weight="400" fill="#8e9aa9" textLength="212" lengthAdjust="spacingAndGlyphs" transform="rotate(26.8 397 1667.7)" stroke="#fbfbfa" stroke-width="2.5" paint-order="stroke" stroke-linejoin="round">Mount Auburn St.</text>
<text x="1683" y="1470" font-size="21" font-weight="400" fill="#8e9aa9" textLength="200" lengthAdjust="spacingAndGlyphs" transform="rotate(64.5 1683 1470)" text-anchor="end" stroke="#fbfbfa" stroke-width="2.5" paint-order="stroke" stroke-linejoin="round">Rutherford Ave.</text>
<text x="1552" y="1473" font-size="21" font-weight="400" fill="#8e9aa9" textLength="330" lengthAdjust="spacingAndGlyphs" transform="rotate(72.5 1552 1473)" text-anchor="end" stroke="#fbfbfa" stroke-width="2.5" paint-order="stroke" stroke-linejoin="round">Interstate 93 HOV lane</text>
<text x="1642" y="1606" font-size="24" font-weight="400" fill="#8e9aa9" textLength="290" lengthAdjust="spacingAndGlyphs" transform="rotate(41.8 1642 1606)" stroke="#fbfbfa" stroke-width="2.5" paint-order="stroke" stroke-linejoin="round">Interstate 93 HOV lane</text>
<text x="153" y="1796" font-size="21" font-weight="400" fill="#8e9aa9" textLength="200" lengthAdjust="spacingAndGlyphs" transform="rotate(-65 153 1796)" text-anchor="end" stroke="#fbfbfa" stroke-width="2.5" paint-order="stroke" stroke-linejoin="round">Soldiers Field Rd.</text>
<text x="1569" y="1838" font-size="21" font-weight="400" fill="#8e9aa9" textLength="190" lengthAdjust="spacingAndGlyphs" transform="rotate(-61 1569 1838)" text-anchor="end" stroke="#fbfbfa" stroke-width="2.5" paint-order="stroke" stroke-linejoin="round">Land Boulevard</text>
<text x="1727" y="1909" font-size="21" font-weight="400" fill="#8e9aa9" textLength="70" lengthAdjust="spacingAndGlyphs" transform="rotate(-64 1727 1909)" text-anchor="end" stroke="#fbfbfa" stroke-width="2.5" paint-order="stroke" stroke-linejoin="round">Street</text>
<text x="431" y="1372.5" font-size="21" font-weight="400" fill="#8e9aa9" textLength="200" lengthAdjust="spacingAndGlyphs" transform="rotate(-90 431 1372.5)" stroke="#fbfbfa" stroke-width="2.5" paint-order="stroke" stroke-linejoin="round">Massachusetts Ave</text>
<path id="tp1" d="M110.1 1620.4 C116.7 1619.2 136.1 1613.5 149.6 1613.1 C163.1 1612.8 177.3 1614 191.2 1618.3 C205.1 1622.7 219.6 1631.1 232.8 1639.1 C246 1647.1 264 1661.7 270.2 1666.2" fill="none"/>
<text font-size="21" fill="#8e9aa9" stroke="#fbfbfa" stroke-width="2.5" paint-order="stroke"><textPath href="#tp1" textLength="176" lengthAdjust="spacing">Memorial Drive</textPath></text>
<path id="tp2" d="M460.1 1775.6 C465.2 1782.7 482.1 1802.3 490.6 1818.3 C499.1 1834.2 505.9 1852.2 511 1871.2 C516.1 1890.2 519.4 1922 521.1 1932.2" fill="none"/>
<text font-size="21" fill="#8e9aa9" stroke="#fbfbfa" stroke-width="2.5" paint-order="stroke"><textPath href="#tp2" textLength="168" lengthAdjust="spacing">Memorial Drive</textPath></text>
<path id="tp3" d="M446.7 1806.9 C449.9 1812.9 459.9 1828.6 466.2 1842.7 C472.5 1856.8 479.4 1874.6 484.5 1891.5 C489.6 1908.5 494.7 1935.6 496.7 1944.4" fill="none"/>
<text font-size="20" font-style="italic" fill="#7f97a3" stroke="#dfe5e8" stroke-width="2" paint-order="stroke"><textPath href="#tp3" textLength="146" lengthAdjust="spacing">Charles River</textPath></text>
<path id="tp4" d="M1696 1898 C1700.2 1892.3 1710.6 1875.3 1721 1863.7 C1731.4 1852.1 1743.7 1838.5 1758.4 1828.3 C1773.1 1818.1 1800.9 1806.7 1809.4 1802.3" fill="none"/>
<text font-size="22" font-style="italic" fill="#7f97a3" stroke="#e6eaeb" stroke-width="2" paint-order="stroke"><textPath href="#tp4" textLength="155" lengthAdjust="spacing">Charles River</textPath></text>
<text x="468.2" y="1928.1" font-size="21" fill="#8e9aa9" transform="rotate(88 468.2 1928.1)">Soldiers Field Rd</text>
</g>
<rect x="455.4" y="1371.5" width="1117.6" height="640" fill="#4a86f5" fill-opacity=".2" stroke="#4a86f5" stroke-width="6.8" stroke-linejoin="round"/>
</g></svg>
<div class="leaflet-control-zoom"><a class="zin" href="#" title="Zoom in"><span>+</span></a><a class="zout" href="#" title="Zoom out"><span>−</span></a></div>
<!--/map--></div>
</main>

<aside class="card">
  <div class="card-header"><h2>Tools</h2></div>
  <ul class="tools">
    <li style="top:134px">
      <span class="cb" style="left:43.5px;top:8.2px"></span>
      <label style="left:89.4px;letter-spacing:.37px">Bookmark</label>
    </li>
    <li style="top:221.4px">
      <svg style="left:43.5px;top:11.9px" width="30.9" height="26.7" viewBox="0 32 512 448" preserveAspectRatio="none"><path fill="#6c757d" d="M464 256h-80v-64c0-35.300 28.700-64 64-64h8c13.300 0 24-10.700 24-24V56c0-13.300-10.700-24-24-24h-8c-88.400 0-160 71.600-160 160v240c0 26.500 21.500 48 48 48h128c26.500 0 48-21.500 48-48V304c0-26.500-21.500-48-48-48zm-288 0H96v-64c0-35.300 28.700-64 64-64h8c13.300 0 24-10.700 24-24V56c0-13.300-10.700-24-24-24h-8C71.600 32 0 103.600 0 192v240c0 26.500 21.500 48 48 48h128c26.500 0 48-21.500 48-48V304c0-26.500-21.500-48-48-48z"/></svg>
      <a href="#" style="left:96px">Cite</a>
    </li>
    <li style="top:309.4px">
      <svg style="left:43.1px;top:13.7px" width="31.3" height="24.9" viewBox="0 64 512 384" preserveAspectRatio="none"><path fill="#6c757d" d="M502.3 190.800c3.900-3.100 9.700-.200 9.700 4.700V400c0 26.500-21.500 48-48 48H48c-26.500 0-48-21.500-48-48V195.600c0-5 5.700-7.800 9.700-4.700 22.400 17.400 52.100 39.500 154.100 113.600 21.100 15.400 56.700 47.800 92.200 47.600 35.700.300 72-32.800 92.300-47.600 102-74.100 131.600-96.300 154-113.700zM256 320c23.200.400 56.600-29.200 73.400-41.400 132.700-96.300 142.800-104.700 173.400-128.700 5.800-4.500 9.200-11.500 9.200-18.900v-19c0-26.500-21.500-48-48-48H48C21.500 64 0 85.500 0 112v19c0 7.400 3.400 14.300 9.200 18.900 30.600 23.900 40.700 32.400 173.400 128.700 16.800 12.200 50.200 41.800 73.400 41.400z"/></svg>
      <a href="#" style="left:96px;letter-spacing:-.7px">Email</a>
    </li>
    <li style="top:396.4px">
      <svg style="left:48.5px;top:9.7px" width="19.3" height="32.4" viewBox="0 0 19.3 32.4"><rect x="0" y="0" width="19.3" height="32.4" rx="3.2" fill="#6c757d"/><rect x="2.6" y="4.6" width="14.1" height="21.4" fill="#fff"/><rect x="7" y="1.9" width="5.3" height="1" rx=".5" fill="#fff"/><circle cx="9.65" cy="29.2" r="1.7" fill="#fff"/></svg>
      <a href="#" style="left:96px;letter-spacing:-.32px">SMS This</a>
    </li>
  </ul>
</aside>
</body>
</html>
